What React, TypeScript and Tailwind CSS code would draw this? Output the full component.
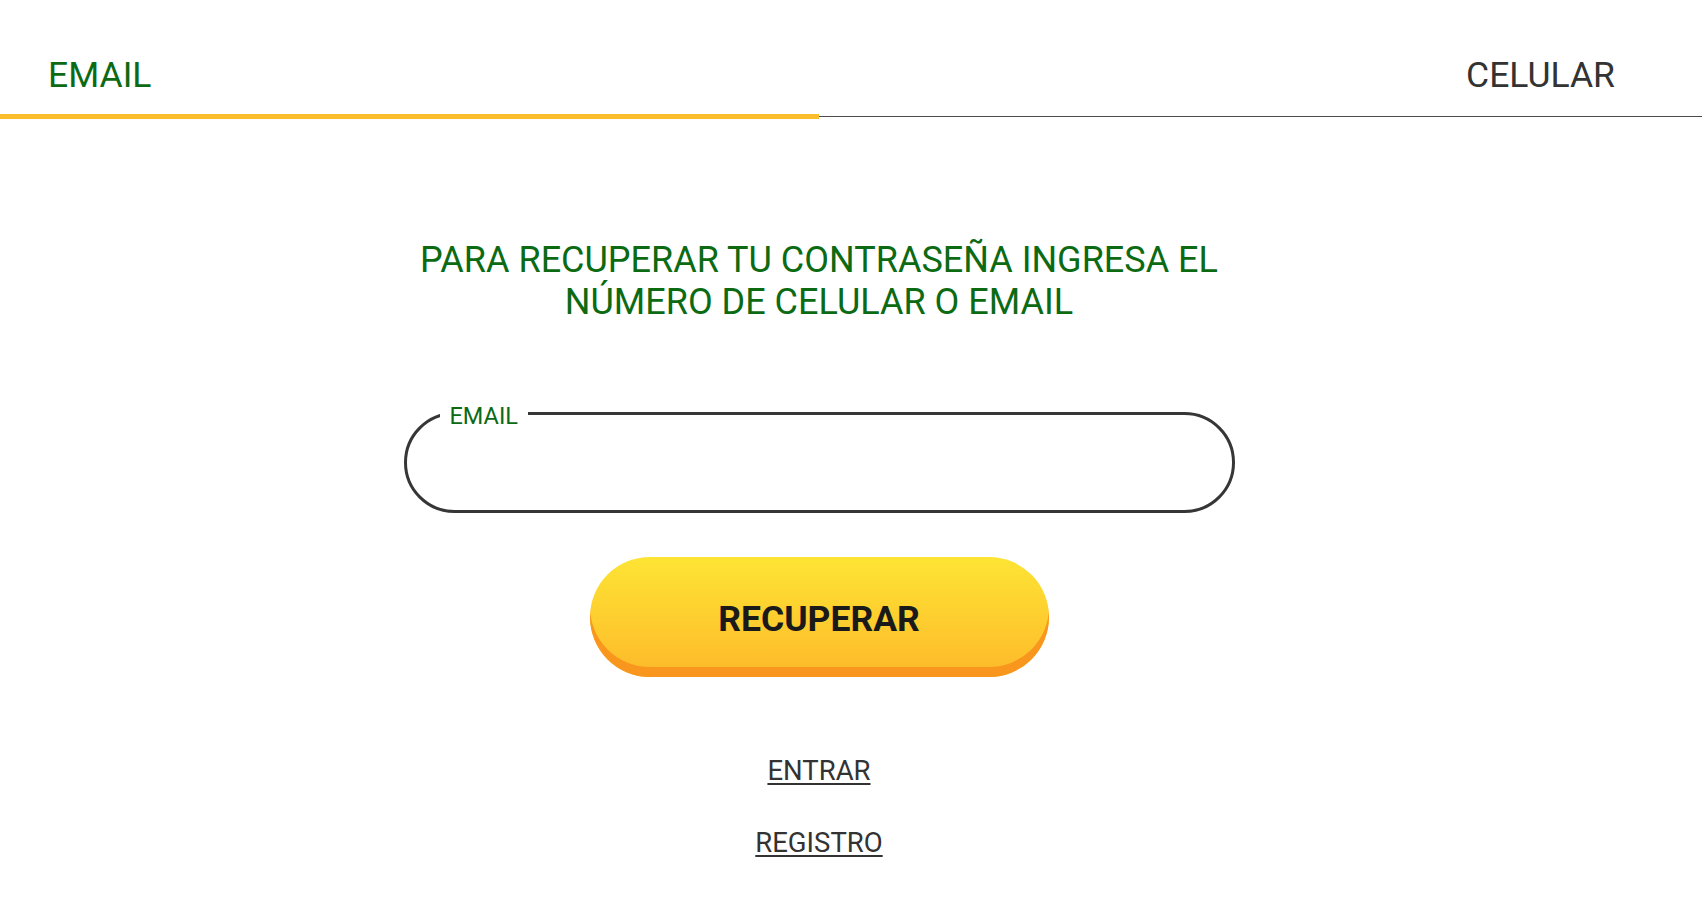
import React from "react";

export default function App() {
  return (
    <div className="min-h-[900px] w-full bg-white font-['Roboto',sans-serif]">
      {/* Tabs */}
      <div className="flex w-full border-b border-[#4a4a4a]">
        <div className="relative h-[116px] w-[819px] pl-[48px] pt-[57px]">
          <span className="block text-[35.5px] leading-[36px] text-[#0b6a12]">EMAIL</span>
          <span className="absolute left-0 -bottom-[3px] h-[5px] w-full bg-[#fbbd2b]" />
        </div>
        <div className="h-[116px] flex-1 pr-[87px] pt-[57px] text-right">
          <span className="text-[35.5px] leading-[36px] text-[#333333]">CELULAR</span>
        </div>
      </div>

      {/* Content */}
      <div className="flex w-[1638px] flex-col items-center">
        <h1 className="mt-[122px] text-center text-[36px] font-normal leading-[42px] text-[#0b6a12]">
          PARA RECUPERAR TU CONTRASEÑA INGRESA EL
          <br />
          NÚMERO DE CELULAR O EMAIL
        </h1>

        <fieldset className="mt-[78px] m-0 w-[831px] rounded-full border-[3px] border-[#363636] pl-[33px] pr-[40px] pt-0 pb-0">
          <legend className="px-[10px] text-[23.5px] leading-[24px] text-[#0b6a12]">
            <span className="relative top-[3px]">EMAIL</span>
          </legend>
          <input
            type="email"
            className="block h-[85px] w-full bg-transparent text-[24px] text-[#333] outline-none"
          />
        </fieldset>

        <button className="mt-[44px] flex h-[120px] w-[459px] items-center justify-center rounded-full bg-linear-to-b from-[#fde434] to-[#fdb92a] pt-[6px] text-[35.5px] font-bold text-[#1a1a1a] shadow-[inset_0_-10px_0_#f8961d]">
          RECUPERAR
        </button>

        <a className="mt-[78px] block text-[27.5px] leading-[32px] text-[#333333] underline underline-offset-[3px] decoration-[2px]" href="#">
          ENTRAR
        </a>
        <a className="mt-[40px] block text-[27.5px] leading-[32px] text-[#333333] underline underline-offset-[3px] decoration-[2px]" href="#">
          REGISTRO
        </a>
      </div>
    </div>
  );
}
